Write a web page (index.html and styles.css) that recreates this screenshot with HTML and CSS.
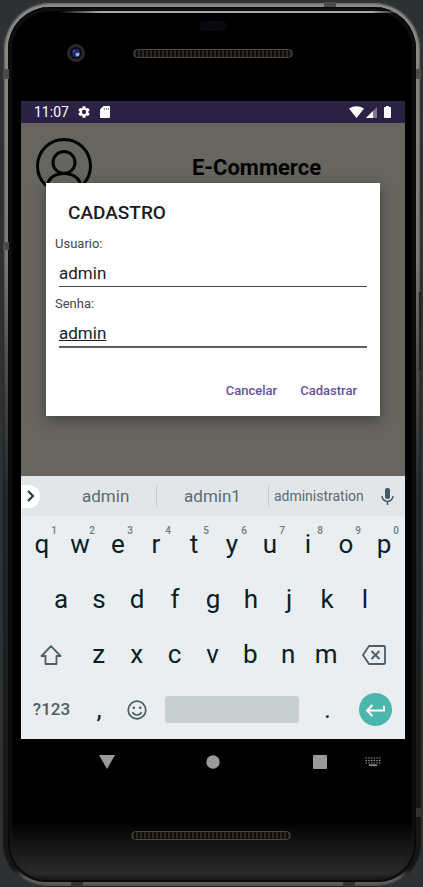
FILE: index.html
```html
<!DOCTYPE html>
<html lang="pt-BR">
<head>
<meta charset="utf-8">
<meta name="viewport" content="width=device-width, initial-scale=1">
<title>E-Commerce</title>
<link rel="stylesheet" href="styles.css">
</head>
<body>
<div class="phone">
  <span class="seam seam-top"></span>
  <span class="seam seam-left"></span>
  <span class="seam seam-left-low"></span>
  <span class="seam seam-right"></span>
  <span class="seam seam-power"></span>
  <span class="seam seam-right-low"></span>
  <span class="seam seam-base-left"></span>
  <span class="seam seam-base-right"></span>
  <div class="glass">
    <div class="forehead">
      <span class="sensor"></span>
      <div class="forehead-row">
        <svg class="camera" viewBox="0 0 18 18" aria-hidden="true">
          <circle cx="9" cy="9" r="9" fill="#29272a"/>
          <circle cx="9" cy="9" r="6" fill="#0a0b14"/>
          <circle cx="9" cy="9" r="4" fill="#1c2a66"/>
          <circle cx="10.5" cy="10.5" r="2" fill="#8fa5ee"/>
          <circle cx="7" cy="7" r="1" fill="#405bb8"/>
        </svg>
        <span class="speaker"></span>
      </div>
    </div>

    <div class="screen">
      <header class="status">
        <span class="clock">11:07</span>
        <svg class="icon-gear" viewBox="2 2 20 20" aria-hidden="true"><path fill="#fff" d="M19.14 12.94c.04-.3.06-.61.06-.94 0-.32-.02-.64-.07-.94l2.03-1.58a.49.49 0 0 0 .12-.61l-1.92-3.32a.49.49 0 0 0-.59-.22l-2.39.96c-.5-.38-1.03-.7-1.62-.94l-.36-2.54a.48.48 0 0 0-.48-.41h-3.84c-.24 0-.43.17-.47.41l-.36 2.54c-.59.24-1.13.57-1.62.94l-2.39-.96a.48.48 0 0 0-.59.22L2.74 8.87c-.12.21-.08.47.12.61l2.03 1.58c-.05.3-.09.63-.09.94s.02.64.07.94l-2.03 1.58a.49.49 0 0 0-.12.61l1.92 3.32c.12.22.37.29.59.22l2.39-.96c.5.38 1.03.7 1.62.94l.36 2.54c.05.24.24.41.48.41h3.84c.24 0 .44-.17.47-.41l.36-2.54c.59-.24 1.13-.56 1.62-.94l2.39.96c.22.08.47 0 .59-.22l1.92-3.32a.48.48 0 0 0-.12-.61l-2.01-1.58zM12 15.6a3.6 3.6 0 1 1 0-7.2 3.6 3.6 0 0 1 0 7.2z"/></svg>
        <svg class="icon-card" viewBox="0 0 10 12" aria-hidden="true"><path fill="#fff" d="M3.5 0H9a1 1 0 0 1 1 1v10a1 1 0 0 1-1 1H1a1 1 0 0 1-1-1V3.500z"/><path stroke="#2b2142" d="M4.500 2v2M6.500 2v2M8.500 2v2" stroke-width=".5"/></svg>
        <svg class="icon-wifi" viewBox="0 0 15 12" aria-hidden="true"><path fill="#fff" d="M0 2.500Q7.500-2 15 2.500L7.500 12z"/></svg>
        <svg class="icon-signal" viewBox="0 0 11 11" aria-hidden="true"><path fill="#fff" fill-opacity=".4" d="M0 11 11 0v11z"/><path fill="#fff" d="M0 11 7 4v7z"/></svg>
        <svg class="icon-battery" viewBox="0 0 7 12" aria-hidden="true"><path fill="#fff" d="M2 0h3v1h1a1 1 0 0 1 1 1v9a1 1 0 0 1-1 1H1a1 1 0 0 1-1-1V2a1 1 0 0 1 1-1h1z"/></svg>
      </header>

      <main class="app">
        <div class="app-bar">
          <svg class="avatar" viewBox="0 0 56 56" fill="none" stroke="#000" stroke-width="3" aria-hidden="true">
            <circle cx="28" cy="28" r="26.500"/>
            <circle cx="28" cy="24.500" r="11"/>
            <path d="M11.500 48C12 40 19 35.500 28 35.500S44 40 44.500 48"/>
          </svg>
          <h1 class="brand">E-Commerce</h1>
        </div>
        <form class="dialog">
          <h2 class="dialog-title">CADASTRO</h2>
          <label class="label" for="user">Usuario:</label>
          <input class="field" id="user" type="text" value="admin">
          <label class="label" for="pass">Senha:</label>
          <input class="field field-active" id="pass" type="text" value="admin">
          <div class="actions">
            <button class="action" type="button">Cancelar</button>
            <button class="action" type="button">Cadastrar</button>
          </div>
        </form>
      </main>

      <div class="suggestions">
        <button class="expand" type="button" aria-label="Mais"><svg viewBox="0 0 8 12" fill="none" stroke="#263238" stroke-width="2" aria-hidden="true"><path d="M1 1l5 5-5 5"/></svg></button>
        <button class="word" type="button">admin</button>
        <button class="word" type="button">admin1</button>
        <button class="word word-long" type="button">administration</button>
        <button class="mic" type="button" aria-label="Voz"><svg viewBox="0 0 13 17" aria-hidden="true"><rect x="4" y="0" width="5" height="11" rx="2" fill="#455a64"/><path d="M1 8a5.500 5.500 0 0 0 11 0M6.500 13.500V17" fill="none" stroke="#455a64" stroke-width="1.500"/></svg></button>
      </div>

      <div class="keyboard">
        <div class="row row-top">
          <button class="key" type="button">q<sup>1</sup></button>
          <button class="key" type="button">w<sup>2</sup></button>
          <button class="key" type="button">e<sup>3</sup></button>
          <button class="key" type="button">r<sup>4</sup></button>
          <button class="key" type="button">t<sup>5</sup></button>
          <button class="key" type="button">y<sup>6</sup></button>
          <button class="key" type="button">u<sup>7</sup></button>
          <button class="key" type="button">i<sup>8</sup></button>
          <button class="key" type="button">o<sup>9</sup></button>
          <button class="key" type="button">p<sup>0</sup></button>
        </div>
        <div class="row row-home">
          <button class="key" type="button">a</button>
          <button class="key" type="button">s</button>
          <button class="key" type="button">d</button>
          <button class="key" type="button">f</button>
          <button class="key" type="button">g</button>
          <button class="key" type="button">h</button>
          <button class="key" type="button">j</button>
          <button class="key" type="button">k</button>
          <button class="key" type="button">l</button>
        </div>
        <div class="row row-low">
          <button class="key" type="button" aria-label="Shift"><svg class="icon-shift" viewBox="0 0 22 20" fill="none" stroke="#4c5d66" stroke-width="1.800" stroke-linejoin="round" aria-hidden="true"><path d="M11 1.200 20.500 11H16.500v8h-11v-8H1.500z"/></svg></button>
          <button class="key" type="button">z</button>
          <button class="key" type="button">x</button>
          <button class="key" type="button">c</button>
          <button class="key" type="button">v</button>
          <button class="key" type="button">b</button>
          <button class="key" type="button">n</button>
          <button class="key" type="button">m</button>
          <button class="key" type="button" aria-label="Apagar"><svg class="icon-delete" viewBox="0 0 24 20" fill="none" stroke="#4c5d66" stroke-width="1.800" stroke-linejoin="round" aria-hidden="true"><path d="M7 1h15a1 1 0 0 1 1 1v16a1 1 0 0 1-1 1H7L1 10z"/><path d="m9.500 6 8 8m0-8-8 8"/></svg></button>
        </div>
        <div class="row row-base">
          <button class="key key-mode" type="button">?123</button>
          <button class="key" type="button">,</button>
          <button class="key" type="button" aria-label="Emoji"><svg class="icon-smile" viewBox="0 0 20 20" fill="none" stroke="#4c5d66" stroke-width="1.700" aria-hidden="true"><circle cx="10" cy="10" r="8.800"/><path d="M5.500 12.200a5 5 0 0 0 9 0"/><circle cx="6.800" cy="7.800" r="1.300" fill="#4c5d66" stroke="none"/><circle cx="13.200" cy="7.800" r="1.300" fill="#4c5d66" stroke="none"/></svg></button>
          <button class="space" type="button" aria-label="Espaço"></button>
          <button class="key" type="button">.</button>
          <button class="key" type="button" aria-label="Enter"><svg class="icon-enter" viewBox="0 0 33 33" aria-hidden="true"><circle cx="16.500" cy="16.500" r="16.500" fill="#4db6ac"/><path d="M25 13v4.500H8.500M13.500 12l-5.500 5.500 5.500 5.500" fill="none" stroke="#fff" stroke-width="2"/></svg></button>
        </div>
      </div>

      <nav class="nav">
        <button class="nav-key" type="button" aria-label="Voltar"><svg width="16" height="14" viewBox="0 0 16 14" aria-hidden="true"><path fill="#9a9a9a" d="M0 0h16L8 14z"/></svg></button>
        <button class="nav-key" type="button" aria-label="Início"><svg width="14" height="14" viewBox="0 0 14 14" aria-hidden="true"><circle cx="7" cy="7" r="6.700" fill="#9a9a9a"/></svg></button>
        <button class="nav-key" type="button" aria-label="Recentes"><svg width="14" height="14" viewBox="0 0 14 14" aria-hidden="true"><rect width="14" height="14" rx="1" fill="#9a9a9a"/></svg></button>
        <button class="nav-switch" type="button" aria-label="Teclado"><svg width="16" height="9" viewBox="0 0 16 9" stroke="#9a9a9a" aria-hidden="true"><path d="M.5 1h15M.5 3.500h15M.5 6h15" stroke-width="1.200" stroke-dasharray="1.500 1.200"/><path d="M4 8.200h8" stroke-width="1.500"/></svg></button>
      </nav>
    </div>

    <div class="chin"><span class="speaker"></span></div>
  </div>
</div>
</body>
</html>
```
FILE: styles.css
```css
* { box-sizing: border-box; }

body {
  margin: 0;
  padding: 2px 2px 3px 3px;
  background: #2e3133;
  font-family: Roboto, "Liberation Sans", sans-serif;
}

button {
  margin: 0;
  padding: 0;
  border: 0;
  background: none;
  font: inherit;
  color: inherit;
}

svg { display: block; }

/* Handset */
.phone {
  position: relative;
  display: flex;
  min-height: calc(100vh - 5px);
  padding: 5px;
  border-radius: 48px 48px 44px 44px;
  background: linear-gradient(#8b8b89, #7c7c7c 28%, #4a4a4b 42%, #262728 56%, #151516 98%, #5c5c5c 99%);
  box-shadow: inset 0 0 2px 1px #1c1c1c;
}

.glass {
  flex: 1;
  display: flex;
  flex-direction: column;
  border-radius: 42px 42px 38px 38px;
  padding: 0 11px 0 13px;
  background: linear-gradient(#000 93%, #2b2b2b 99%, #111);
  box-shadow: inset 0 0 0 2px #0a0a0a, inset 0 0 3px 3px #1c1c1c;
}

.seam { position: absolute; background: #4b4b4b; }
.seam-top { top: 0; left: 321px; width: 12px; height: 5px; }
.seam-left { top: 67px; left: 0; width: 6px; height: 10px; }
.seam-left-low { top: 240px; left: 0; width: 6px; height: 8px; }
.seam-right { top: 67px; right: 0; width: 5px; height: 10px; }
.seam-power { top: 290px; right: 0; width: 2px; height: 78px; background: #222; }
.seam-right-low { bottom: 70px; right: 0; width: 5px; height: 9px; background: #333; }
.seam-base-left { bottom: 0; left: 68px; width: 12px; height: 5px; background: #333; }
.seam-base-right { bottom: 0; right: 66px; width: 12px; height: 5px; background: #333; }

.forehead {
  height: 94px;
  padding-top: 4px;
}

.forehead::before {
  content: "";
  display: block;
  height: 2px;
  margin: 0 6px 0 38px;
  border-radius: 0 12px 0 0;
  background: linear-gradient(90deg, transparent, #a7aaac 12%, #a7aaac 92%, transparent);
}

.sensor {
  display: block;
  width: 28px;
  height: 10px;
  margin: 8px auto 0;
  border-radius: 5px;
  background: #07090e;
}

.forehead-row {
  display: grid;
  grid-template-columns: 1fr 160px 1fr;
  align-items: center;
  margin-top: 13px;
}

.camera { width: 18px; height: 18px; margin-left: 46px; }

.speaker {
  display: block;
  width: 160px;
  height: 9px;
  border: 1px solid #4b4640;
  border-radius: 5px;
  background: repeating-linear-gradient(90deg, #2c2925 0 2px, #0d0c0b 2px 4px);
}

.chin {
  height: 98px;
  padding: 47px 4px 0 0;
}

.chin .speaker { margin: 0 auto; }

.screen {
  flex: 1;
  display: flex;
  flex-direction: column;
}

/* Status bar */
.status {
  display: flex;
  align-items: center;
  height: 22px;
  padding: 0 14px 0 13px;
  background: #2b2142;
  color: #fff;
}

.clock { font-size: 14px; line-height: 22px; }
.icon-gear { width: 12px; height: 12px; margin-left: 9px; }
.icon-card { width: 10px; height: 12px; margin-left: 10px; }
.icon-wifi { width: 15px; height: 12px; margin-left: auto; }
.icon-signal { width: 11px; height: 11px; margin-left: 2px; }
.icon-battery { width: 7px; height: 12px; margin-left: 7px; }

/* App page and dialog */
.app {
  position: relative;
  flex: 1;
  min-height: 353px;
  background: #666560;
}

.app-bar {
  display: grid;
  grid-template-columns: 86px 1fr;
  align-items: center;
  padding: 15px 0 0 15px;
}

.avatar { width: 56px; height: 56px; }

.brand {
  margin: 0;
  padding: 3px 14px 0 0;
  font-size: 22px;
  line-height: 26px;
  font-weight: 700;
  text-align: center;
  color: #000;
}

.dialog {
  position: absolute;
  top: 60px;
  left: 25px;
  right: 25px;
  display: flex;
  flex-direction: column;
  padding: 18px 13px 9px 9px;
  background: #fff;
  box-shadow: 0 4px 14px rgba(0, 0, 0, .35);
}

.dialog-title {
  margin: 0 0 10px 13px;
  font-size: 19px;
  line-height: 24px;
  font-weight: 500;
  color: #1c1b1f;
}

.label {
  font-size: 13px;
  line-height: 18px;
  color: #49454f;
}

.field {
  height: 34px;
  margin: 0 0 8px 4px;
  padding: 6px 0 0;
  border: 0;
  border-bottom: 1px solid #49454f;
  outline: 0;
  background: none;
  font: 17px/24px Roboto, "Liberation Sans", sans-serif;
  color: #1c1b1f;
}

.field-active {
  height: 35px;
  border-bottom: 2px solid #625b71;
  text-decoration: underline;
}

.actions {
  display: flex;
  justify-content: flex-end;
  gap: 23px;
  padding: 19px 10px 0 0;
}

.action {
  font-size: 13px;
  line-height: 32px;
  font-weight: 500;
  color: #6750a4;
}

/* Keyboard */
.suggestions {
  display: grid;
  grid-template-columns: 34px 10fr 11fr 10fr 36px;
  align-items: center;
  height: 40px;
  background: #e2e6e9;
  color: #5c6b72;
}

.expand {
  display: flex;
  align-items: center;
  width: 19px;
  height: 23px;
  padding-left: 6px;
  border-radius: 0 12px 12px 0;
  background: #fff;
}

.expand svg { width: 8px; height: 12px; }

.word {
  height: 22px;
  font-size: 17px;
  line-height: 22px;
}

.word + .word { border-left: 1px solid #c5cacd; }
.word-long { font-size: 14px; }

.mic { justify-self: center; }
.mic svg { width: 13px; height: 17px; }

.keyboard {
  padding: 1px 0 2px;
  background: #eaeef1;
  color: #071e28;
}

.row {
  display: grid;
  align-items: center;
  height: 55px;
}

.row-top { grid-template-columns: repeat(10, 1fr); padding: 0 2px; }
.row-home { grid-template-columns: repeat(9, 1fr); padding: 0 21px; }
.row-low { grid-template-columns: 3fr repeat(7, 2fr) 3fr; padding: 0 3px 0 2px; }
.row-base { grid-template-columns: 3fr 2fr 2fr 143px 3fr 2fr; padding: 0 11px 0 2px; }

.key {
  position: relative;
  display: flex;
  align-items: center;
  justify-content: center;
  height: 55px;
  font-size: 26px;
  line-height: 55px;
}

.key sup {
  position: absolute;
  top: 8px;
  right: 4px;
  font-size: 10px;
  line-height: 12px;
  font-weight: 500;
  color: #6f7c82;
}

.key-mode { font-size: 17px; font-weight: 500; color: #4c5d66; }

.icon-shift { width: 22px; height: 20px; }
.icon-delete { width: 24px; height: 20px; }
.icon-smile { width: 20px; height: 20px; }
.icon-enter { width: 33px; height: 33px; }

.space {
  height: 27px;
  margin-left: 9px;
  border-radius: 3px;
  background: #c9ced1;
}

/* Navigation */
.nav {
  display: grid;
  grid-template-columns: 33px 1fr 1fr 1fr 32px;
  align-items: center;
  height: 45px;
}

.nav-key { display: flex; justify-content: center; }
.nav-key:first-child { grid-column: 2; }
.nav-switch { justify-self: start; margin-left: -8px; }
```
